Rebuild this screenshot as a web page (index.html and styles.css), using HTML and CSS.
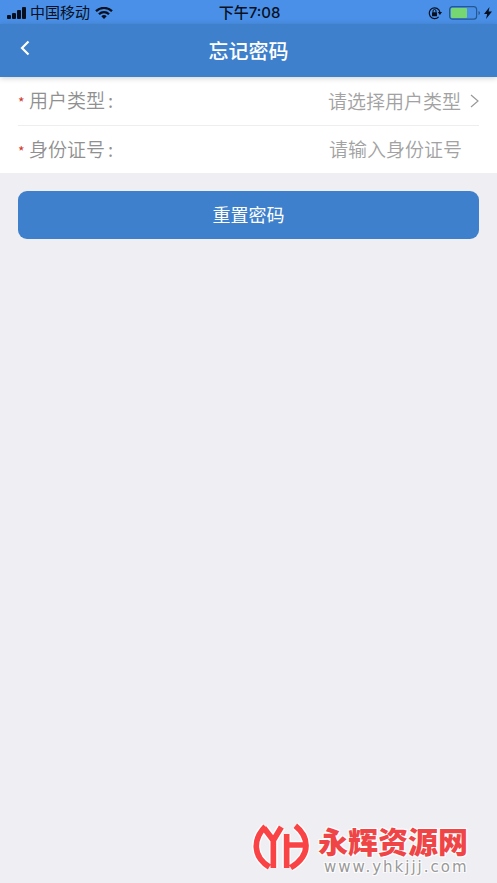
FILE: index.html
```html
<!DOCTYPE html>
<html lang="zh-CN">
<head>
<meta charset="utf-8">
<meta name="viewport" content="width=device-width, initial-scale=1">
<title>忘记密码</title>
<link rel="stylesheet" href="styles.css">
</head>
<body>
<div class="status">
  <div class="status-left">
    <svg class="signal" viewBox="0 0 20 12" aria-hidden="true"><rect x="0" y="8" width="4" height="4" rx="1"/><rect x="5" y="6" width="4" height="6" rx="1"/><rect x="10" y="3" width="4" height="9" rx="1"/><rect x="15" y="0" width="4" height="12" rx="1"/></svg>
    <span>中国移动</span>
    <svg class="wifi" viewBox="0 0 18 12" aria-hidden="true"><path d="M1 4.200a11.500 11.500 0 0 1 16 0M4 7.200a7 7 0 0 1 10 0" fill="none" stroke="#06101f" stroke-width="2.300"/><path d="M6.300 9.300a4 4 0 0 1 5.400 0L9 12z"/></svg>
  </div>
  <span class="time">下午7:08</span>
  <div class="status-right">
    <svg class="lock" viewBox="0 0 14 14" aria-hidden="true"><path d="M10.600 10.900A5.400 5.400 0 1 1 11.900 6" fill="none" stroke="#06101f" stroke-width="1.200"/><path d="M9.800 6h4.200l-2.100 3z"/><rect x="4" y="6.200" width="5" height="4" rx=".5"/><path d="M5 6.500V5a1.500 1.500 0 0 1 3 0v1.500" fill="none" stroke="#06101f"/></svg>
    <svg class="battery" viewBox="0 0 32 14" aria-hidden="true"><rect x=".6" y=".6" width="27" height="12.600" rx="3" fill="none" stroke="#24588f" stroke-width="1.200"/><rect x="2" y="2" width="16" height="10" rx="1" fill="#76d672"/><path d="M29.500 5v4q1.500-.5 1.500-2t-1.500-2" fill="#24588f"/></svg>
    <svg class="bolt" viewBox="0 0 8 12" aria-hidden="true"><path d="M5.500 0 0 7h3.200L2 12l6-7.500H4.600z"/></svg>
  </div>
</div>
<header class="bar">
  <button class="back" type="button" aria-label="返回"><svg viewBox="0 0 10 16" aria-hidden="true"><path d="M8.500 1.500 2 8l6.500 6.500" fill="none" stroke="#fff" stroke-width="2.200"/></svg></button>
  <h1>忘记密码</h1>
</header>
<form>
  <div class="fields">
    <div class="row">
      <label for="type"><span class="star">*</span>用户类型<span class="colon">:</span></label>
      <select id="type"><option>请选择用户类型</option></select>
      <svg class="chevron" viewBox="0 0 9 14" aria-hidden="true"><path d="m1 1 7 6-7 6" fill="none" stroke="#999" stroke-width="1.200"/></svg>
    </div>
    <div class="row">
      <label for="idno"><span class="star">*</span>身份证号<span class="colon">:</span></label>
      <input id="idno" type="text" placeholder="请输入身份证号">
    </div>
  </div>
  <button class="submit" type="submit">重置密码</button>
</form>
<footer class="mark">
  <svg class="logo" viewBox="6 6 168 150" aria-hidden="true">
    <defs><path id="mono" d="M46 22C8 62 8 112 58 144M42 27 70 64 94 24M70 62V147M110 45V147M110 78H166M136 20C176 52 186 108 122 146"/></defs>
    <use class="halo" href="#mono"/><use class="ink" href="#mono"/>
  </svg>
  <div class="mark-text"><span class="brand">永辉资源网</span><span class="site">www.yhkjjj.com</span></div>
</footer>
</body>
</html>
```
FILE: styles.css
```css
* { box-sizing: border-box; }
body {
  margin: 0;
  min-height: 100vh;
  display: flex;
  flex-direction: column;
  background: #eeeef3;
  color: #999;
  font-family: "Noto Sans CJK SC", sans-serif;
}
button, input, select { font: inherit; border: 0; padding: 0; background: none; }
svg { display: block; flex: none; }
.status {
  height: 24px;
  display: grid;
  grid-template-columns: 1fr auto 1fr;
  align-items: center;
  padding: 1px 5px 0 7px;
  background: #4a90e8;
  color: #06101f;
  font: 15px/22px Inter, "Noto Sans CJK SC", sans-serif;
}
.status svg { fill: #06101f; }
.status-left, .status-right { display: flex; align-items: center; }
.status-left { gap: 3px; }
.status-right { justify-content: flex-end; gap: 3px; }
.signal { width: 20px; height: 12px; }
.wifi { width: 18px; height: 12px; margin-left: 2px; }
.time { font-weight: 500; }
.lock { width: 14px; height: 14px; margin-right: 4px; }
.battery { width: 32px; height: 14px; }
.bolt { width: 8px; height: 12px; }
.bar {
  height: 53px;
  display: grid;
  grid-template-columns: 48px 1fr 48px;
  align-items: center;
  background: #3e80cb;
  color: #fff;
  box-shadow: 0 1px 6px rgba(0, 0, 0, .2);
  z-index: 1;
}
.back { height: 48px; padding: 0 0 6px 20px; }
.back svg { width: 10px; height: 16px; }
h1 { margin: 0; text-align: center; font-size: 20px; line-height: 52px; font-weight: 500; }
.fields { padding: 0 18px; background: #fff; }
.row { height: 48px; display: flex; align-items: center; font-size: 19px; line-height: 28px; font-weight: 350; }
.row label { color: #909090; }
.row + .row { border-top: 1px solid #eee; padding-right: 17px; }
.star { display: inline-block; width: 11px; color: #d03a2a; font-size: 14px; font-weight: 400; }
.colon { padding-left: 3px; }
.row select, .row input {
  flex: 1;
  min-width: 0;
  height: 40px;
  color: #a2a2a2;
  text-align: right;
  text-align-last: right;
  appearance: none;
  outline: 0;
}
.row input { padding-bottom: 2px; }
.row input::placeholder { color: #a2a2a2; opacity: 1; }
.chevron { width: 9px; height: 14px; margin-left: 9px; }
.submit {
  display: block;
  width: calc(100% - 36px);
  height: 48px;
  margin: 18px;
  padding-bottom: 2px;
  border-radius: 9px;
  background: #3e80cb;
  color: #fff;
  font-size: 18px;
}
.mark { margin-top: auto; display: flex; justify-content: flex-end; gap: 10px; padding: 0 27px 8px 0; }
.logo { width: 56px; height: 50px; overflow: visible; fill: none; }
.ink { stroke: #f94345; stroke-width: 17px; }
.halo { stroke: #fff; stroke-width: 25px; }
.mark-text {
  display: flex;
  flex-direction: column;
  text-shadow: 1px 1px 1px #fff, -1px -1px 1px #fff, 1px -1px 1px #fff, -1px 1px 1px #fff;
}
.brand { padding-right: 2px; color: #f04547; font: 900 30px/38px "Noto Sans CJK SC", sans-serif; }
.site { padding-left: 6px; color: #999; font: 15px/16px "DejaVu Sans", sans-serif; letter-spacing: 2px; }
```
